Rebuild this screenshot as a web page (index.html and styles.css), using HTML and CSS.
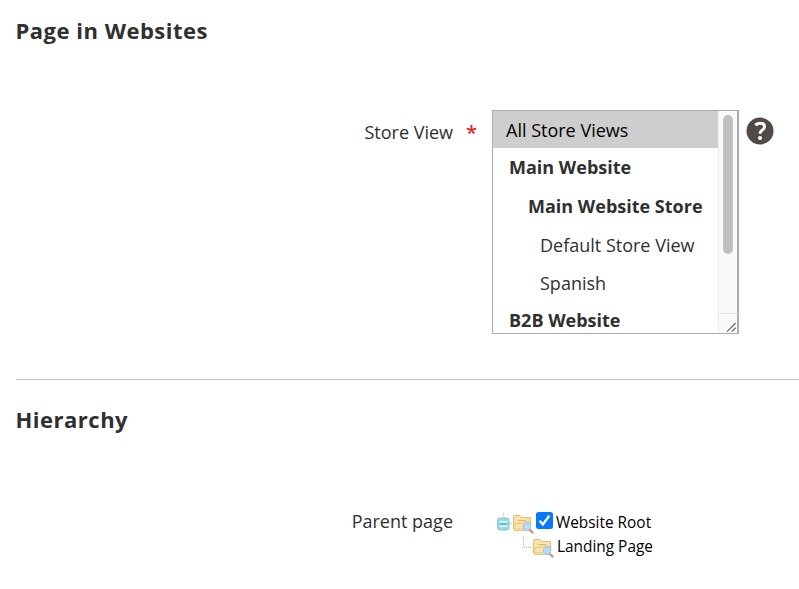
FILE: index.html
```html
<!DOCTYPE html>
<html lang="en">
<head>
	<meta charset="UTF-8">
	<meta name="viewport" content="width=device-width, initial-scale=1.0">
	<title>Page in Websites</title>
	<link rel="stylesheet" href="styles.css">
</head>
<body>
	<svg class="sprite" width="0" height="0">
		<defs>
			<linearGradient id="folder-fill" x1="0" y1="0" x2="0" y2="1">
				<stop offset="0" stop-color="#fff2c4"/>
				<stop offset="1" stop-color="#f6cf7c"/>
			</linearGradient>
			<symbol id="folder" viewBox="0 0 22 20">
				<path d="M1.500 15v-12q0-1.500 1.500-1.500h5l1.500 2h9v11.500z" fill="#fbe3a8" stroke="#e5bd79"/>
				<path d="M6 6.500h8" stroke="#e0b86f"/>
				<path d="M2 16.500l1.500-7h6l1.500-1.500h8l-1 8.500z" fill="url(#folder-fill)" stroke="#ecc57d"/>
				<path d="M17.500 15.500l3 3" stroke="#c99976" stroke-width="2.400" stroke-linecap="round"/>
				<circle cx="15" cy="12.500" r="3.900" fill="#b9dcf6" stroke="#9cc3e6"/>
			</symbol>
		</defs>
	</svg>

	<section class="fieldset">
		<h2 class="title">Page in Websites</h2>
		<div class="field">
			<label class="label">Store View</label>
			<span class="required">*</span>
			<div class="control">
				<div class="multiselect">
					<ul class="options">
						<li class="option selected">All Store Views</li>
						<li class="option website">Main Website</li>
						<li class="option store">Main Website Store</li>
						<li class="option view">Default Store View</li>
						<li class="option view">Spanish</li>
						<li class="option website">B2B Website</li>
					</ul>
					<div class="scrollbar">
						<div class="thumb"></div>
						<svg class="resizer" width="19" height="20" viewBox="0 0 19 20" stroke="#666" stroke-width="1.200">
							<path d="M8 18.500l9-9M13 18.500l4-4" />
						</svg>
					</div>
				</div>
				<svg class="help" width="28" height="28" viewBox="0 0 28 28">
					<circle cx="14" cy="14" r="13.500" fill="#514943"/>
					<path d="M9.300 8.200Q11.500 6.200 14.300 6.200Q18.500 6.200 18.500 9.700Q18.500 11.700 16.100 13.200Q14 14.500 14 16.800" fill="none" stroke="#fff" stroke-width="3"/>
					<circle cx="14" cy="21" r="2" fill="#fff"/>
				</svg>
			</div>
		</div>
	</section>

	<section class="fieldset hierarchy">
		<h2 class="title">Hierarchy</h2>
		<div class="field">
			<label class="label">Parent page</label>
			<div class="tree">
				<div class="node">
					<svg class="toggle" width="17" height="24" viewBox="0 0 17 24">
						<path d="M8.500 3v5M14 13.500h3" stroke="#bbb" stroke-dasharray="1 1"/>
						<rect x="2.500" y="8" width="11.500" height="12" rx="2.500" fill="#98d9e2" stroke="#7cc9d5"/>
						<path d="M4.500 14h8" stroke="#e5fafc" stroke-width="6"/>
						<path d="M4.500 14h8" stroke="#65bfd0" stroke-width="2.500"/>
					</svg>
					<svg class="folder" width="22" height="20"><use href="#folder"/></svg>
					<svg class="checkbox" width="17" height="17" viewBox="0 0 17 17">
						<rect width="17" height="17" rx="2.500" fill="#0878fa"/>
						<path d="M3.500 8.700l3.400 3.700L13.300 3.800" fill="none" stroke="#fff" stroke-width="2.300"/>
					</svg>
					<span class="name">Website Root</span>
				</div>
				<div class="node child">
					<svg class="elbow" width="10" height="24" viewBox="0 0 10 24">
						<path d="M1.500 2v11.500H10" fill="none" stroke="#bbb" stroke-dasharray="1 1"/>
					</svg>
					<svg class="folder" width="22" height="20"><use href="#folder"/></svg>
					<span class="name">Landing Page</span>
				</div>
			</div>
		</div>
	</section>
</body>
</html>
```

FILE: styles.css
```css
* {
	box-sizing: border-box;
}
body {
	margin: 0;
	padding-left: 16px;
	height: 589px;
	overflow: hidden;
	background: #fff;
	color: #303030;
	font-family: "Open Sans", "Noto Sans", sans-serif;
	font-size: 18px;
}
svg {
	display: block;
	flex: none;
}
.sprite {
	display: none;
}
.fieldset {
	height: 379px;
	padding-top: 15px;
}
.hierarchy {
	height: 210px;
	padding-top: 24px;
	border-top: 1px solid #c4c4c4;
}
.title {
	margin: 0 0 0 -0.5px;
	font-size: 22px;
	font-weight: 700;
	line-height: 30px;
	letter-spacing: 0.5px;
}
.field {
	display: grid;
	grid-template-columns: 437px 39px 1fr;
	align-items: start;
	margin-top: 65px;
}
.label {
	padding-top: 10px;
	line-height: 24px;
	text-align: right;
}
.required {
	padding: 11px 0 0 13px;
	color: #e22626;
	font-size: 20px;
	font-weight: 600;
	line-height: 24px;
}
.control {
	display: flex;
	gap: 7px;
}
.multiselect {
	display: flex;
	width: 247px;
	height: 224px;
	border: 1px solid #adadad;
	border-right-width: 2px;
}
.options {
	flex: 1;
	height: 222px;
	margin: 0;
	padding: 0;
	overflow: hidden;
	list-style: none;
}
.option {
	height: 38px;
	line-height: 39px;
	white-space: nowrap;
}
.selected {
	height: 37px;
	padding-left: 13px;
	background: #cecece;
	color: #000;
}
.website {
	padding-left: 16px;
	font-weight: 700;
}
.store {
	height: 40px;
	padding-left: 35px;
	font-weight: 700;
	line-height: 41px;
}
.view {
	height: 37px;
	padding-left: 47px;
	line-height: 38px;
}
.view:nth-child(4) {
	height: 38px;
	line-height: 39px;
}
.scrollbar {
	display: flex;
	flex-direction: column;
	justify-content: space-between;
	width: 19px;
	background: #fafafa;
	border-left: 1px solid #ebebeb;
}
.thumb {
	width: 10px;
	height: 139px;
	margin: 4px 0 0 4px;
	background: #c1c1c1;
	border-radius: 5px;
}
.resizer {
	border-top: 1px solid #e5e5e5;
}
.help {
	margin-top: 6.5px;
}
.hierarchy .field {
	margin-top: 75px;
}
.hierarchy .label {
	padding-top: 0;
}
.tree {
	grid-column: 3;
	padding: 1px 0 0 3px;
	color: #000;
	font-size: 15.4px;
}
.node {
	display: flex;
	align-items: center;
	height: 24px;
	line-height: 24px;
}
.node .folder {
	margin-top: 3px;
}
.checkbox {
	margin: -4px 3px 0 2px;
}
.name {
	padding-top: 1px;
	white-space: nowrap;
}
.child {
	padding-left: 27px;
}
.child .name {
	padding-left: 3px;
}
```
